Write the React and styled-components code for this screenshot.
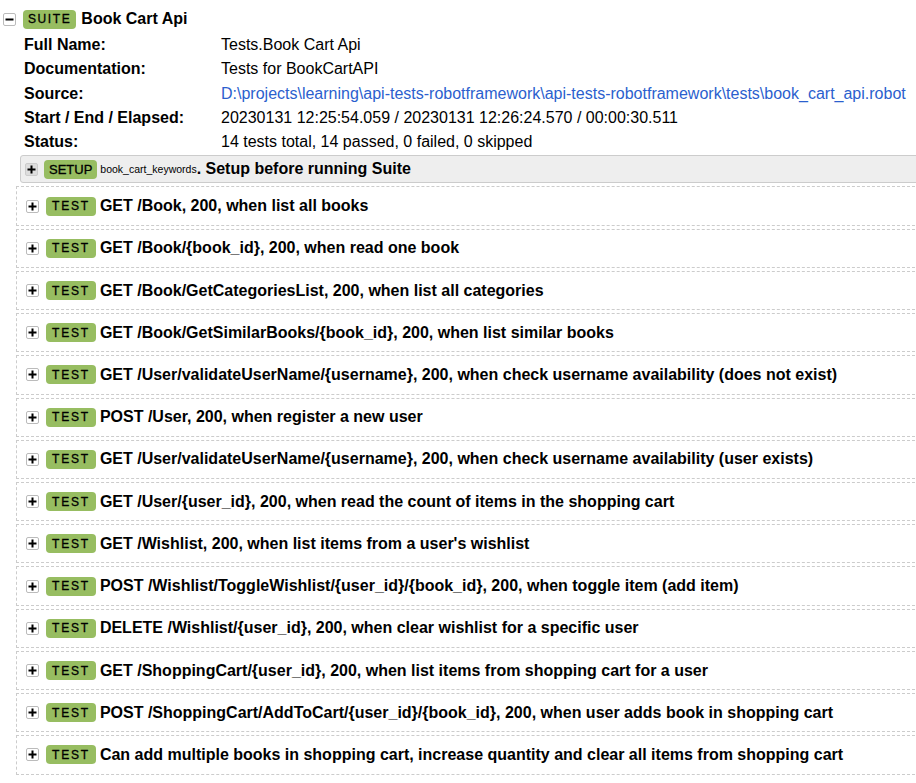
import styled, { createGlobalStyle } from 'styled-components';

const GlobalStyle = createGlobalStyle`
    html, body {
        margin: 0;
        padding: 0;
        background: #fff;
        font-family: "Liberation Sans", Arial, sans-serif;
        font-size: 16px;
        color: #000;
    }
`

const Page = styled.div`
    width: 916px;
    height: 783px;
    overflow: hidden;
`

const SuiteHeader = styled.div`
    display: flex;
    align-items: center;
    height: 24px;
    padding: 7px 0 0 3px;
`

const Toggle = styled.span`
    box-sizing: border-box;
    width: 13px;
    height: 13px;
    flex: none;
    display: flex;
    align-items: center;
    justify-content: center;
    border: 1px solid ${props => props.filled ? '#ccc' : '#bbb'};
    border-radius: 2px;
    background: ${props => props.filled ? '#ddd' : '#fff'};
    margin-right: ${props => props.gap}px;

    svg {
        display: block;
    }
`

const Label = styled.span`
    display: inline-flex;
    align-items: center;
    height: 19px;
    padding: 0 ${props => props.pad}px;
    flex: none;
    background: #97bd61;
    border-radius: 4px;
    font-size: ${props => props.size || 12}px;
    letter-spacing: ${props => props.spacing}px;
    color: #000;
    margin-right: ${props => props.gap || 4}px;
    -webkit-text-stroke: 0.3px #000;
`

const Name = styled.span`
    font-weight: bold;
    font-size: 16px;
    white-space: nowrap;
`

const Metadata = styled.table`
    border-collapse: collapse;
    margin-left: 21px;
    margin-top: 2px;

    th, td {
        padding: 0 3px;
        height: 24.3px;
        vertical-align: middle;
        font-size: 16px;
        white-space: nowrap;
    }

    th {
        text-align: left;
        font-weight: bold;
        width: 191px;
    }

    a {
        color: #2b5fce;
        text-decoration: none;
    }
`

const Children = styled.div`
    margin-left: 16px;
    margin-top: 1px;
`

const SetupBar = styled.div`
    display: flex;
    align-items: center;
    height: 26px;
    margin-left: 4px;
    margin-right: -4px;
    padding-left: 4px;
    border: 1px solid #ccc;
    border-radius: 3px 0 0 3px;
    background: #eee;

    .owner {
        font-size: 10.5px;
        margin-left: -1px;
    }
`

const TestBox = styled.div`
    box-sizing: border-box;
    display: flex;
    align-items: center;
    height: 39.23px;
    margin-top: 3px;
    margin-right: -4px;
    padding: 0 0 0 9px;
    border: 1px dashed #ccc;
`

function Sign({ minus }) {
    return (
        <svg width="9" height="9" viewBox="0 0 9 9">
            <rect x="0.5" y="3.5" width="8" height="2" fill="#000" />
            {!minus && <rect x="3.5" y="0.5" width="2" height="8" fill="#000" />}
        </svg>
    )
}

const meta = [
    ['Full Name:', 'Tests.Book Cart Api'],
    ['Documentation:', 'Tests for BookCartAPI'],
    ['Source:', 'D:\\projects\\learning\\api-tests-robotframework\\api-tests-robotframework\\tests\\book_cart_api.robot', true],
    ['Start / End / Elapsed:', '20230131 12:25:54.059 / 20230131 12:26:24.570 / 00:00:30.511'],
    ['Status:', '14 tests total, 14 passed, 0 failed, 0 skipped'],
];

const tests = [
    'GET /Book, 200, when list all books',
    'GET /Book/{book_id}, 200, when read one book',
    'GET /Book/GetCategoriesList, 200, when list all categories',
    'GET /Book/GetSimilarBooks/{book_id}, 200, when list similar books',
    'GET /User/validateUserName/{username}, 200, when check username availability (does not exist)',
    'POST /User, 200, when register a new user',
    'GET /User/validateUserName/{username}, 200, when check username availability (user exists)',
    'GET /User/{user_id}, 200, when read the count of items in the shopping cart',
    "GET /Wishlist, 200, when list items from a user's wishlist",
    'POST /Wishlist/ToggleWishlist/{user_id}/{book_id}, 200, when toggle item (add item)',
    'DELETE /Wishlist/{user_id}, 200, when clear wishlist for a specific user',
    'GET /ShoppingCart/{user_id}, 200, when list items from shopping cart for a user',
    'POST /ShoppingCart/AddToCart/{user_id}/{book_id}, 200, when user adds book in shopping cart',
    'Can add multiple books in shopping cart, increase quantity and clear all items from shopping cart',
];

function App() {
    return (
        <Page>
            <GlobalStyle />
            <SuiteHeader>
                <Toggle gap={7}><Sign minus /></Toggle>
                <Label pad={5} spacing={1.6} gap={5}>SUITE</Label>
                <Name>Book Cart Api</Name>
            </SuiteHeader>
            <Metadata>
                <tbody>
                    {meta.map(([key, value, link]) => (
                        <tr key={key}>
                            <th>{key}</th>
                            <td>{link ? <a href="#source">{value}</a> : value}</td>
                        </tr>
                    ))}
                </tbody>
            </Metadata>
            <Children>
                <SetupBar>
                    <Toggle filled gap={6}><Sign /></Toggle>
                    <Label pad={5} spacing={0} size={13}>SETUP</Label>
                    <span className='owner'>book_cart_keywords</span>
                    <Name>. Setup before running Suite</Name>
                </SetupBar>
                {tests.map((name, ind) => (
                    <TestBox key={`t${ind}`}>
                        <Toggle gap={7}><Sign /></Toggle>
                        <Label pad={6} spacing={1.8}>TEST</Label>
                        <Name>{name}</Name>
                    </TestBox>
                ))}
            </Children>
        </Page>
    )
}

export default App;
